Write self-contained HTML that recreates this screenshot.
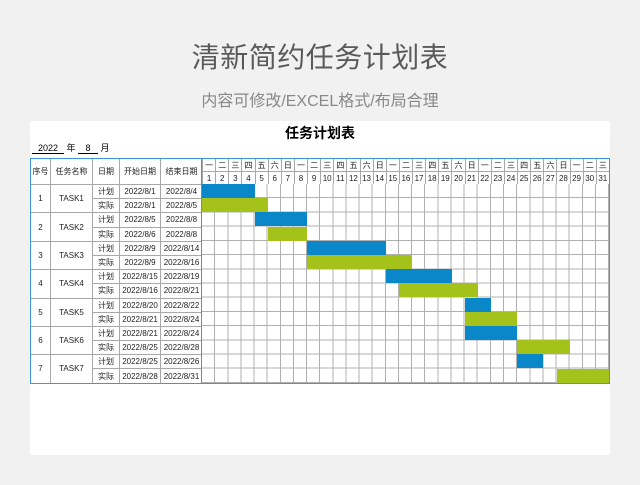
<!DOCTYPE html>
<html><head><meta charset="utf-8"><style>
*{margin:0;padding:0;box-sizing:border-box}
body{width:640px;height:485px;background:#f1f1f1;position:relative;overflow:hidden;font-family:"Liberation Sans","Noto Sans CJK SC",sans-serif}
.t1{position:absolute;top:36px;left:0;width:640px;text-align:center;font-size:28px;color:#5a5a5a;letter-spacing:0.5px}
.t2{position:absolute;top:87px;left:0;width:640px;text-align:center;font-size:16px;color:#888}
.sheet{position:absolute;left:30px;top:121px;width:580px;height:334px;background:#fff}
.st{position:absolute;left:0;top:2px;width:580px;text-align:center;font-size:14px;font-weight:bold;color:#000}
.ym{position:absolute;left:2px;top:141px;font-size:9px;color:#000}
table{position:absolute;left:30px;top:158px;border-collapse:collapse;table-layout:fixed;font-size:8px;color:#222}
td{border:1px solid #a8a8a8;text-align:center;height:13px;padding:0;overflow:hidden;white-space:nowrap;line-height:11px}
.b td.bt{border-bottom:1px solid #8cc4e8}
.grid{position:absolute;left:202px;top:184px;width:407px;height:199px;
background-image:repeating-linear-gradient(90deg,transparent 0,transparent 12.13px,#b0b0b0 12.13px,#b0b0b0 13.13px),repeating-linear-gradient(180deg,transparent 0,transparent 13.21px,#b0b0b0 13.21px,#b0b0b0 14.21px);background-color:#fff}
.bar{position:absolute;height:14px}
.p{background:#0a87c8}.a{background:#a5c21b}
.frame{position:absolute;left:30px;top:158px;width:580px;height:226px;border:1px solid #3a9ad8;pointer-events:none}
.vl{position:absolute;left:201px;top:158px;width:1px;height:226px;background:#3a9ad8}
</style></head><body>
<div class="t1">清新简约任务计划表</div>
<div class="t2">内容可修改/EXCEL格式/布局合理</div>
<div class="sheet">
<div class="st">任务计划表</div>
</div>
<div style="position:absolute;left:32px;top:141px;font-size:9px">
<span style="display:inline-block;width:32px;border-bottom:1px solid #000;text-align:center">2022</span> 年 <span style="display:inline-block;width:20px;border-bottom:1px solid #000;text-align:center">8</span> 月</div>
<table>
<colgroup><col style="width:20px"><col style="width:42px"><col style="width:27px"><col style="width:41px"><col style="width:42px"><col span="31" style="width:13.13px"></colgroup>
<tr style="height:13px"><td rowspan="2">序号</td><td rowspan="2">任务名称</td><td rowspan="2">日期</td><td rowspan="2">开始日期</td><td rowspan="2">结束日期</td>
<td>一</td><td>二</td><td>三</td><td>四</td><td>五</td><td>六</td><td>日</td><td>一</td><td>二</td><td>三</td><td>四</td><td>五</td><td>六</td><td>日</td><td>一</td><td>二</td><td>三</td><td>四</td><td>五</td><td>六</td><td>日</td><td>一</td><td>二</td><td>三</td><td>四</td><td>五</td><td>六</td><td>日</td><td>一</td><td>二</td><td>三</td></tr>
<tr style="height:13px"><td>1</td><td>2</td><td>3</td><td>4</td><td>5</td><td>6</td><td>7</td><td>8</td><td>9</td><td>10</td><td>11</td><td>12</td><td>13</td><td>14</td><td>15</td><td>16</td><td>17</td><td>18</td><td>19</td><td>20</td><td>21</td><td>22</td><td>23</td><td>24</td><td>25</td><td>26</td><td>27</td><td>28</td><td>29</td><td>30</td><td>31</td></tr>
</table>
<table style="top:184px">
<colgroup><col style="width:20px"><col style="width:42px"><col style="width:27px"><col style="width:41px"><col style="width:42px"></colgroup>
<tr style="height:14.2px"><td rowspan="2">1</td><td rowspan="2">TASK1</td><td>计划</td><td>2022/8/1</td><td>2022/8/4</td></tr>
<tr style="height:14.2px"><td>实际</td><td>2022/8/1</td><td>2022/8/5</td></tr>
<tr style="height:14.2px"><td rowspan="2">2</td><td rowspan="2">TASK2</td><td>计划</td><td>2022/8/5</td><td>2022/8/8</td></tr>
<tr style="height:14.2px"><td>实际</td><td>2022/8/6</td><td>2022/8/8</td></tr>
<tr style="height:14.2px"><td rowspan="2">3</td><td rowspan="2">TASK3</td><td>计划</td><td>2022/8/9</td><td>2022/8/14</td></tr>
<tr style="height:14.2px"><td>实际</td><td>2022/8/9</td><td>2022/8/16</td></tr>
<tr style="height:14.2px"><td rowspan="2">4</td><td rowspan="2">TASK4</td><td>计划</td><td>2022/8/15</td><td>2022/8/19</td></tr>
<tr style="height:14.2px"><td>实际</td><td>2022/8/16</td><td>2022/8/21</td></tr>
<tr style="height:14.2px"><td rowspan="2">5</td><td rowspan="2">TASK5</td><td>计划</td><td>2022/8/20</td><td>2022/8/22</td></tr>
<tr style="height:14.2px"><td>实际</td><td>2022/8/21</td><td>2022/8/24</td></tr>
<tr style="height:14.2px"><td rowspan="2">6</td><td rowspan="2">TASK6</td><td>计划</td><td>2022/8/21</td><td>2022/8/24</td></tr>
<tr style="height:14.2px"><td>实际</td><td>2022/8/25</td><td>2022/8/28</td></tr>
<tr style="height:14.2px"><td rowspan="2">7</td><td rowspan="2">TASK7</td><td>计划</td><td>2022/8/25</td><td>2022/8/26</td></tr>
<tr style="height:14.2px"><td>实际</td><td>2022/8/28</td><td>2022/8/31</td></tr>
</table>
<div class="grid">
<div class="bar p" style="top:0;left:0;width:53px"></div>
<div class="bar a" style="top:14.2px;left:0;width:66px"></div>
<div class="bar p" style="top:28.4px;left:53px;width:52px"></div>
<div class="bar a" style="top:42.6px;left:66px;width:39px"></div>
<div class="bar p" style="top:56.8px;left:105px;width:79px"></div>
<div class="bar a" style="top:71px;left:105px;width:105px"></div>
<div class="bar p" style="top:85.2px;left:184px;width:66px"></div>
<div class="bar a" style="top:99.4px;left:197px;width:79px"></div>
<div class="bar p" style="top:113.6px;left:263px;width:26px"></div>
<div class="bar a" style="top:127.8px;left:263px;width:52px"></div>
<div class="bar p" style="top:142px;left:263px;width:52px"></div>
<div class="bar a" style="top:156.2px;left:315px;width:53px"></div>
<div class="bar p" style="top:170.4px;left:315px;width:26px"></div>
<div class="bar a" style="top:184.6px;left:355px;width:52px"></div>
</div>
<div class="vl"></div>
<div class="frame"></div>
</body></html>
